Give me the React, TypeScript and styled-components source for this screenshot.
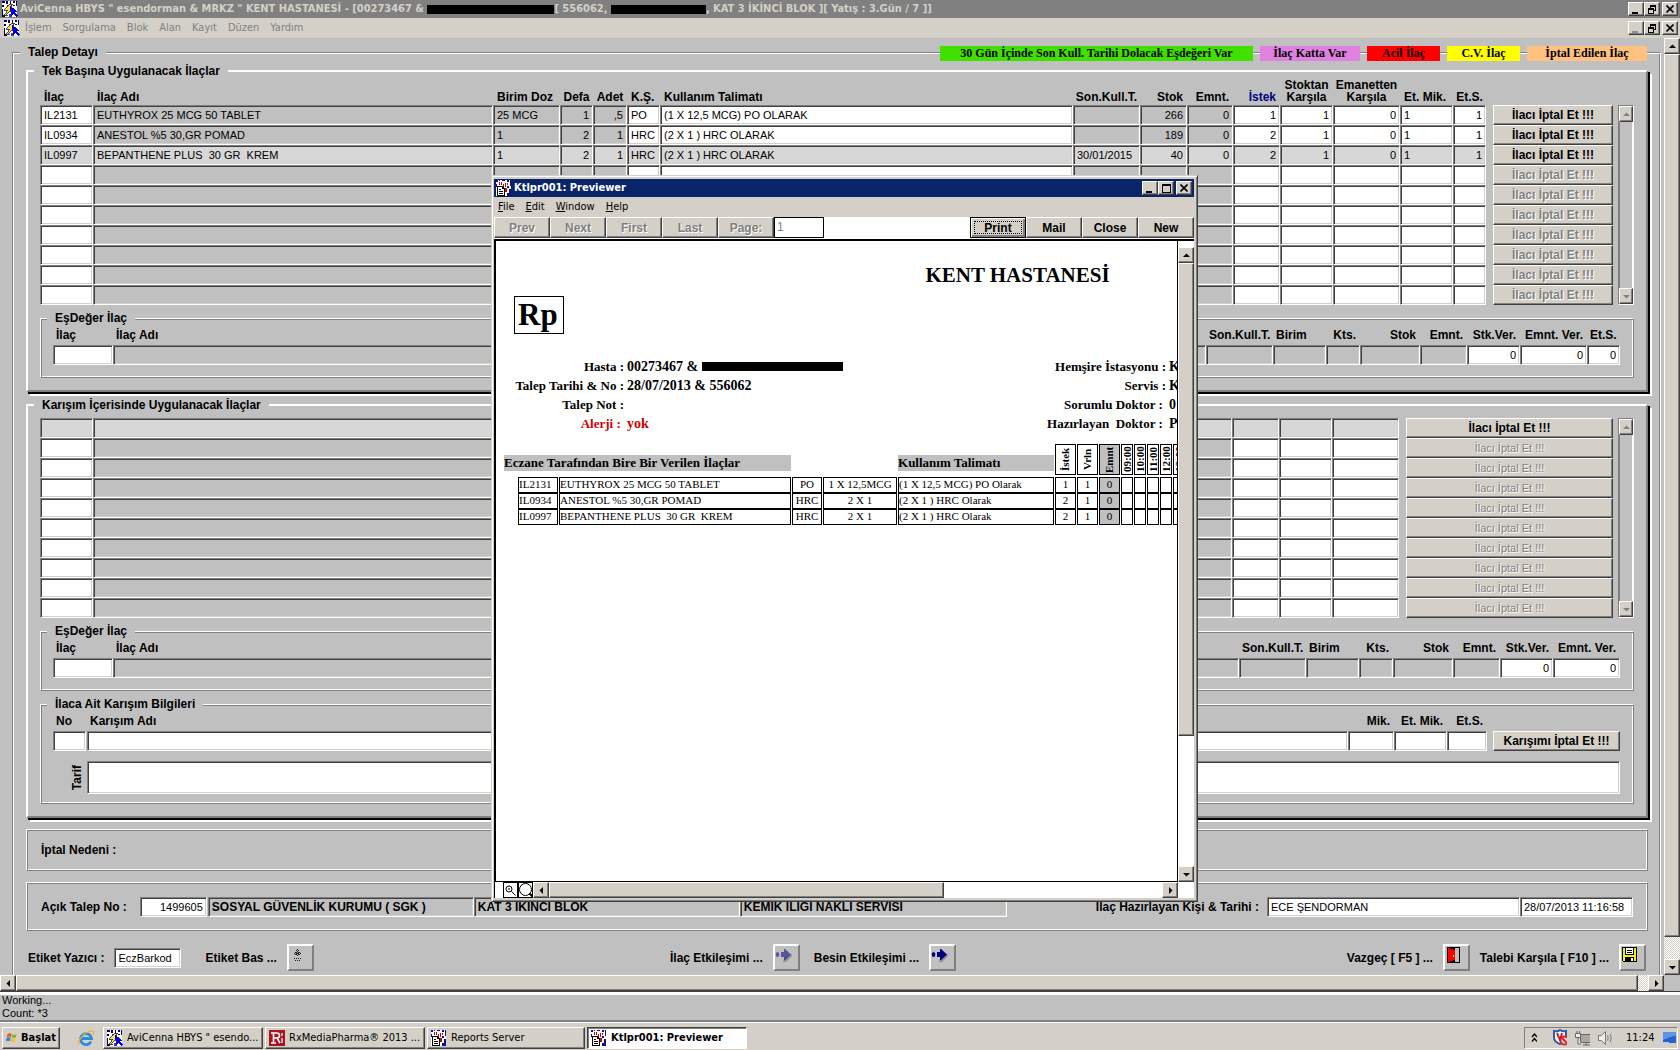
import React from "react";
import styled, { createGlobalStyle, css } from "styled-components";

const FACE = "#d4d0c8";
const FORM = "#c0c0c0";
const LIT = "#d7d7d7";
const NAVY = "#0a246a";

const UI_FONT = `"DejaVu Sans Condensed", "Noto Sans", sans-serif`;
const FORM_FONT = `"Liberation Sans", sans-serif`;
const PRINT_FONT = `"Liberation Serif", serif`;

const GlobalStyle = createGlobalStyle`
  *, *::before, *::after { box-sizing: border-box; }
  body { margin: 0; background: ${FACE}; }
  button, input, textarea { font: inherit; color: inherit; border-radius: 0; margin: 0; }
  button { cursor: default; }
`;

const raised = css`
  border: 1px solid;
  border-color: #fff #404040 #404040 #fff;
  box-shadow: inset -1px -1px 0 #808080;
  background: ${FACE};
`;

const sunken = css`
  border: 1px solid;
  border-color: #808080 #fff #fff #808080;
  box-shadow: inset 1px 1px 0 #404040, inset -1px -1px 0 ${FACE};
`;

const etched = css`
  border: 1px solid;
  border-color: #fff #808080 #808080 #fff;
  box-shadow: inset 1px 1px 0 #808080, inset -1px -1px 0 #fff;
`;

const Desktop = styled.div`
  position: relative;
  display: flex;
  flex-direction: column;
  height: 100vh;
  overflow: hidden;
  background: ${FORM};
  font-family: ${FORM_FONT};
  font-size: 12px;
  color: #000;
`;

/* ---------- window chrome ---------- */

const TitleBar = styled.header<{ $active?: boolean }>`
  display: flex;
  align-items: center;
  flex: none;
  height: 18px;
  padding: 0 2px;
  background: ${(p) => (p.$active ? NAVY : "#808080")};
  color: ${(p) => (p.$active ? "#fff" : FACE)};
  font: bold 11px/18px ${UI_FONT};
`;

const TitleText = styled.h1`
  display: flex;
  align-items: center;
  flex: 1;
  margin: 0 0 0 2px;
  font: inherit;
  white-space: pre;
`;

const Redacted = styled.span<{ $w: number }>`
  display: inline-block;
  width: ${(p) => p.$w}px;
  height: 9px;
  background: #000;
`;

const Caption = styled.div`
  display: flex;
`;

const CaptionButton = styled.button<{ $gap?: boolean }>`
  ${raised}
  display: flex;
  align-items: center;
  justify-content: center;
  width: 16px;
  height: 14px;
  padding: 0;
  margin-left: ${(p) => (p.$gap ? 2 : 0)}px;
`;

const MenuBar = styled.nav<{ $dim?: boolean }>`
  display: flex;
  align-items: center;
  flex: none;
  gap: 11px;
  height: 20px;
  padding: 0 2px 0 4px;
  background: ${FACE};
  color: ${(p) => (p.$dim ? "#808080" : "#000")};
  font: 11px/20px ${UI_FONT};
  > svg { margin-right: -6px; }
`;

const MenuItem = styled.button`
  padding: 0;
  border: 0;
  background: none;
`;

const Spacer = styled.div`
  flex: 1;
`;

/* ---------- scrollbars ---------- */

const Bar = styled.div<{ $v?: boolean; $plain?: boolean }>`
  display: flex;
  flex: ${(p) => (p.$v ? "none" : "1")};
  flex-direction: ${(p) => (p.$v ? "column" : "row")};
  ${(p) => (p.$v ? "width: 16px;" : "height: 16px;")}
  background: ${(p) =>
    p.$plain ? "#fff" : "repeating-conic-gradient(#fff 0 25%, #d4d0c8 0 50%) 0 0 / 2px 2px"};
`;

const ArrowButton = styled.button`
  ${raised}
  display: flex;
  align-items: center;
  justify-content: center;
  flex: none;
  width: 16px;
  height: 16px;
  padding: 0;
`;

const Thumb = styled.div`
  ${raised}
`;

const SideBar = styled.div`
  display: flex;
  flex-direction: column;
  justify-content: space-between;
  flex: none;
  width: 16px;
  border: 1px solid;
  border-color: #808080 #fff #fff #808080;
  box-shadow: inset 1px 0 0 #808080, inset -1px 0 0 #fff;
  button { width: 14px; }
`;

/* ---------- form ---------- */

const Viewport = styled.div`
  display: flex;
  flex: 1;
  min-height: 0;
`;

const Form = styled.main`
  flex: 1;
  min-width: 0;
  overflow: hidden;
  padding: 6px 3px 0 12px;
`;

const Legend = styled.legend`
  margin-left: -6px;
  padding: 0 8px;
  background: ${FORM};
  font-weight: bold;
  line-height: 16px;
`;

const Outer = styled.fieldset`
  position: relative;
  min-width: 0;
  min-height: 1000px;
  margin: 0;
  padding: 3px 12px 0 13px;
  border: 1px solid;
  border-color: #808080 #fff #fff #808080;
  box-shadow: inset 1px 1px 0 #fff, inset -1px 0 0 #808080;
`;

const Panel = styled.fieldset<{ $top?: number }>`
  min-width: 0;
  margin: 0 0 5px;
  padding: ${(p) => p.$top ?? 0}px 12px 12px;
  border: 2px solid;
  border-color: #fff #808080 #808080 #fff;
  box-shadow: 2px 2px 0 #000, 4px 4px 0 #fff;
`;

const Group = styled.fieldset<{ $bottom?: number }>`
  min-width: 0;
  margin: 5px 0 0;
  padding: 1px 13px ${(p) => p.$bottom ?? 12}px 12px;
  ${etched}
`;

const Plain = styled.section<{ $h: number }>`
  display: flex;
  align-items: center;
  height: ${(p) => p.$h}px;
  margin-top: 11px;
  padding: 0 14px;
  ${etched}
`;

const Badges = styled.div`
  position: absolute;
  top: -14px;
  right: 13px;
  display: flex;
  gap: 7px;
`;

const Badge = styled.span<{ $w: number; $bg: string }>`
  width: ${(p) => p.$w}px;
  background: ${(p) => p.$bg};
  font: bold 12px/15px ${PRINT_FONT};
  text-align: center;
  white-space: nowrap;
`;

const Split = styled.div`
  display: flex;
  gap: 5px;
`;

const GridTable = styled.table`
  flex: 1 1 auto;
  width: 100%;
  min-width: 0;
  table-layout: fixed;
  border-collapse: collapse;
  th {
    height: 26px;
    padding: 0 4px 2px;
    font-weight: bold;
    line-height: 12px;
    vertical-align: bottom;
    white-space: nowrap;
  }
  td { height: 20px; padding: 0; }
  td:last-child { padding-left: 7px; }
`;

const HeadText = styled.span<{ $align?: string; $blue?: boolean }>`
  display: flex;
  flex-direction: column;
  align-items: ${(p) => (p.$align === "right" ? "flex-end" : p.$align === "center" ? "center" : "flex-start")};
  text-align: ${(p) => p.$align ?? "left"};
  color: ${(p) => (p.$blue ? "#000080" : "#000")};
  white-space: pre;
`;

const Box = styled.input<{ $bg?: string; $align?: string; $bold?: boolean }>`
  ${sunken}
  display: block;
  width: 100%;
  height: 20px;
  padding: 0 3px;
  background: ${(p) => p.$bg ?? "#fff"};
  text-align: ${(p) => p.$align ?? "left"};
  font-weight: ${(p) => (p.$bold ? "bold" : "normal")};
  font-size: ${(p) => (p.$bold ? 12 : 11)}px;
  outline: 0;
`;

const PushButton = styled.button<{ $bold?: boolean }>`
  ${raised}
  display: block;
  width: 100%;
  height: 20px;
  padding: 0;
  font-weight: ${(p) => (p.$bold ? "bold" : "normal")};
  font-size: ${(p) => (p.$bold ? 12 : 11)}px;
  line-height: 16px;
  &:disabled { color: #808080; text-shadow: 1px 1px 0 #fff; }
`;

const FieldRow = styled.div`
  display: flex;
  align-items: flex-end;
`;

const FieldCell = styled.div<{ $w?: number; $gap?: number }>`
  flex: ${(p) => (p.$w ? `0 0 ${p.$w}px` : "1")};
  min-width: 0;
  margin-left: ${(p) => p.$gap ?? 0}px;
`;

const FieldLabel = styled.label<{ $right?: boolean }>`
  display: block;
  margin-bottom: 2px;
  padding: 0 4px 0 3px;
  font-weight: bold;
  line-height: 16px;
  text-align: ${(p) => (p.$right ? "right" : "left")};
  white-space: nowrap;
`;

const RecipeRow = styled.div`
  display: flex;
  align-items: center;
  margin-top: 10px;
`;

const VerticalLabel = styled.label`
  width: 20px;
  margin-left: 14px;
  font-weight: bold;
  line-height: 20px;
  text-align: center;
  writing-mode: vertical-rl;
  transform: rotate(180deg);
`;

const TextArea = styled.textarea`
  ${sunken}
  flex: 1;
  height: 33px;
  background: #fff;
  resize: none;
  outline: 0;
`;

const BoldLabel = styled.label<{ $auto?: boolean; $lead?: boolean }>`
  font-weight: bold;
  white-space: nowrap;
  margin-left: ${(p) => (p.$auto ? "auto" : p.$lead ? "4px" : "0")};
`;

const Actions = styled.div`
  display: flex;
  align-items: center;
  margin-top: 13px;
  padding: 0 2px;
`;

const ActionGroup = styled.div<{ $w?: number; $end?: boolean }>`
  display: flex;
  align-items: center;
  gap: 10px;
  flex: ${(p) => (p.$w ? `0 0 ${p.$w}px` : "none")};
  margin-left: ${(p) => (p.$end ? "auto" : "0")};
`;

const Gap = styled.span<{ $w: number }>`
  flex: none;
  width: ${(p) => p.$w}px;
`;

const IconButton = styled.button`
  width: 27px;
  height: 27px;
  padding: 0 6px 6px 0;
  border: 2px solid;
  border-color: #fff #808080 #808080 #fff;
  background: ${FORM};
  display: flex;
  align-items: center;
  justify-content: center;
`;

const HScrollRow = styled.div`
  display: flex;
  flex: none;
  height: 16px;
`;

const Status = styled.footer`
  flex: none;
  height: 31px;
  padding: 2px 2px 0;
  border-top: 1px solid #404040;
  border-bottom: 2px solid #808080;
  box-shadow: inset 0 3px 0 #fff;
  font-size: 11px;
  line-height: 13px;
`;

/* ---------- taskbar ---------- */

const Taskbar = styled.footer`
  display: flex;
  align-items: center;
  flex: none;
  height: 28px;
  padding: 2px 2px 0;
  background: ${FACE};
  border-top: 1px solid #fff;
  font: 11px/18px ${UI_FONT};
`;

const TaskButton = styled.button<{ $w: number; $active?: boolean }>`
  ${raised}
  display: flex;
  align-items: center;
  gap: 4px;
  width: ${(p) => p.$w}px;
  height: 22px;
  padding: 0 3px;
  margin-right: 2px;
  white-space: nowrap;
  ${(p) =>
    p.$active &&
    css`
      background: #fff;
      border-color: #404040 #fff #fff #404040;
      box-shadow: inset 1px 1px 0 #808080;
      font-weight: bold;
    `}
`;

const Tray = styled.div`
  display: flex;
  align-items: center;
  gap: 8px;
  width: 154px;
  height: 22px;
  margin-left: auto;
  padding: 0 1px 0 6px;
  border: 1px solid;
  border-color: #808080 #fff #fff #808080;
`;

const Clock = styled.time`
  margin-left: 6px;
`;

/* ---------- previewer window ---------- */

const Previewer = styled.section`
  position: absolute;
  left: 491px;
  top: 175px;
  width: 707px;
  height: 727px;
  display: flex;
  flex-direction: column;
  padding: 3px 3px 3px 2px;
  background: ${FACE};
  border: 1px solid;
  border-color: ${FACE} #404040 #404040 ${FACE};
  box-shadow: inset 1px 1px 0 #fff, inset -1px -1px 0 #808080;
`;

const Tools = styled.div`
  display: flex;
  flex: none;
  height: 22px;
  background: #fff;
`;

const ToolButton = styled.button<{ $focus?: boolean }>`
  ${raised}
  width: 56px;
  height: 21px;
  padding: 0;
  font: bold 12px/16px ${FORM_FONT};
  &:disabled { color: #808080; text-shadow: 1px 1px 0 #fff; }
  ${(p) =>
    p.$focus &&
    css`
      border-color: #000;
      outline: 1px dotted #000;
      outline-offset: -5px;
      box-shadow: inset 1px 1px 0 #fff, inset -2px -2px 0 #808080;
    `}
`;

const PageBox = styled.input`
  width: 50px;
  height: 21px;
  padding: 0 2px 2px;
  border: 1px solid #000;
  background: #fff;
  color: #808080;
  outline: 0;
`;

const Stage = styled.div`
  display: flex;
  flex: 1;
  min-height: 0;
  background: #fff;
  border-top: 2px solid #000;
`;

const Sheet = styled.div`
  flex: 1;
  min-width: 0;
  overflow: hidden;
  border: solid #000;
  border-width: 0 1px 1px 2px;
  background: #fff;
  font-family: ${PRINT_FONT};
`;

const StageSide = styled.div`
  display: flex;
  padding-top: 6px;
`;

const Foot = styled.div`
  display: flex;
  flex: none;
  height: 16px;
  padding-left: 8px;
  background: #fff;
  border-left: 1px solid #000;
`;

const ZoomButton = styled.button`
  width: 15px;
  height: 16px;
  padding: 0;
  border: 1px solid #000;
  background: #fff;
  display: flex;
  align-items: center;
  justify-content: center;
`;

const Report = styled.article`
  width: 1043px;
  padding-top: 22px;
`;

const Hospital = styled.h2`
  margin: 0;
  font: bold 21px/24px ${PRINT_FONT};
  text-align: center;
`;

const Rp = styled.div`
  width: 50px;
  height: 38px;
  margin: 9px 0 23px 18px;
  padding-left: 3px;
  border: 1px solid #000;
  font-weight: bold;
  font-size: 31px;
  line-height: 36px;
`;

const Details = styled.dl`
  display: grid;
  grid-template-columns: 128px 340px 196px 200px;
  column-gap: 3px;
  margin: 0 0 11px;
  font-weight: bold;
  font-size: 13px;
  line-height: 19px;
  white-space: pre;
  dt { text-align: right; }
  dd { margin: 0; display: flex; align-items: center; font-size: 14px; }
`;

const Red = styled.span`
  color: #d40000;
`;

const ReportTable = styled.table`
  table-layout: fixed;
  width: 683px;
  margin-left: 7px;
  border-collapse: separate;
  border-spacing: 1px 0;
  font-size: 11px;
  white-space: pre;
  td {
    height: 16px;
    padding: 0;
    border: 1px solid #000;
    line-height: 13px;
    vertical-align: top;
    overflow: hidden;
  }
  td:first-child { border: 0; }
  th { height: 33px; padding: 0; vertical-align: top; }
`;

const Cell = styled.td<{ $center?: boolean; $gray?: boolean }>`
  text-align: ${(p) => (p.$center ? "center" : "left")};
  background: ${(p) => (p.$gray ? FORM : "#fff")};
`;

const SectionName = styled.span`
  display: block;
  margin-top: 11px;
  background: ${FORM};
  font-size: 13px;
  line-height: 16px;
  text-align: left;
`;

const Upright = styled.span<{ $gray?: boolean; $w: number }>`
  display: block;
  width: ${(p) => p.$w}px;
  height: 31px;
  border: 1px solid #000;
  background: ${(p) => (p.$gray ? FORM : "#fff")};
  font-size: 11px;
  line-height: ${(p) => p.$w - 2}px;
  text-align: center;
  writing-mode: vertical-rl;
  transform: rotate(180deg);
`;

/* ---------- drawings ---------- */

const AppIcon = () => (
  <svg width="16" height="16" viewBox="0 0 16 16" shapeRendering="crispEdges" aria-hidden="true">
    <path d="M0 0h15v16H0z" fill="#fff" />
    <path d="M0 0h3v2H0zM4 0h2v3H4zM8 0h1v3H8zM11 0h2v2h-2zM14 0h1v5h-1zM0 4h2v2H0zM0 8h1v8H0zM1 14h2v2H1zM11 4h2v1h-2z" fill="#000060" />
    <path d="M5 4h2v2H5zM7 13h3v3H7zM4 14h2v1H4z" fill="#3c3ca0" />
    <path d="M2 14l4-5H2l6-6h3L8 7h4l-8 7z" fill="#ffe24a" stroke="#222" strokeWidth=".8" />
    <path d="M8 5l8 6h-3l3 4-2 1-3-3-2 2z" fill="#0000e0" />
  </svg>
);

const ReportIcon = () => (
  <svg width="16" height="16" viewBox="0 0 16 16" shapeRendering="crispEdges" aria-hidden="true">
    <path d="M0 0h15v16H0z" fill="#fff" />
    <path d="M0 0h2v2H0zM3 0h1v1H3zM6 0h3v1H6zM11 0h2v2h-2zM14 0h1v6h-1zM0 4h1v3H0zM11 6h2v2h-2zM13 9h2v7h-2zM11 13h2v3h-2z" fill="#10108a" />
    <path d="M3 2h1v3H3zM5 2h1v3H5zM9 3h1v4H9zM7 4h1v3H7zM11 3h1v2h-1zM9 8h2v4H9z" fill="#d00000" />
    <path d="M1 6h5l3 3v7H1z" fill="#000" />
    <path d="M2 7h4v2h2v6H2z" fill="#fff" />
    <path d="M3 9h2v1H3zM3 11h4v1H3zM3 13h4v1H3z" fill="#000" />
  </svg>
);

type Dir = "up" | "down" | "left" | "right";
const arrows: Record<Dir, string> = {
  up: "M0 5h7L3.5 1.500z",
  down: "M0 2h7L3.500 5.500z",
  left: "M5 0v7L1.500 3.500z",
  right: "M2 0v7l3.500-3.500z",
};

const Arrow = ({ dir, dim }: { dir: Dir; dim?: boolean }) => (
  <ArrowButton aria-label={dir} disabled={dim}>
    <svg width="7" height="7" viewBox="0 0 7 7" aria-hidden="true">
      <path d={arrows[dir]} fill={dim ? "#808080" : "#000"} />
    </svg>
  </ArrowButton>
);

const CaptionSet = ({ max, dimMin }: { max?: boolean; dimMin?: boolean }) => (
  <Caption>
    <CaptionButton aria-label="Minimize">
      <svg width="10" height="9" shapeRendering="crispEdges" aria-hidden="true">
        <path d="M1 7h6v2H1z" fill={dimMin ? "#909090" : "#000"} />
      </svg>
    </CaptionButton>
    <CaptionButton aria-label={max ? "Maximize" : "Restore"}>
      <svg width="9" height="9" shapeRendering="crispEdges" aria-hidden="true">
        {max ? (
          <path d="M0 0h9v9H0zM1 2v6h7V2z" fillRule="evenodd" />
        ) : (
          <path d="M2 0h6v6H6v3H0V3h2zM3 2v1h3v2h1V2zM1 5v3h4V5z" fillRule="evenodd" />
        )}
      </svg>
    </CaptionButton>
    <CaptionButton aria-label="Close" $gap>
      <svg width="8" height="8" aria-hidden="true">
        <path d="M.5.5l7 7M7.500.5l-7 7" stroke="#000" strokeWidth="1.600" />
      </svg>
    </CaptionButton>
  </Caption>
);

const ArrowGlyph = ({ dim }: { dim?: boolean }) => (
  <svg width="17" height="14" viewBox="0 0 17 14" aria-hidden="true">
    <path d="M8 14l1-4h1l7-4v2l-6 6z" fill="#909090" />
    <g fill="#000080" opacity={dim ? 0.55 : 1}>
      <ellipse cx="2.500" cy="6.500" rx="1.800" ry="2.500" />
      <path d="M6 4h3V1h1l6 5.500-6 5.500H9V9H6z" />
    </g>
  </svg>
);

/* ---------- data ---------- */

type Col = { head: string; w?: number; right?: boolean; align?: string; gray?: boolean; blue?: boolean };

const cols: Col[] = [
  { head: "İlaç", w: 53 },
  { head: "İlaç Adı", gray: true },
  { head: "Birim Doz", w: 67, gray: true },
  { head: "Defa", w: 33, right: true, gray: true, align: "center" },
  { head: "Adet", w: 34, right: true, gray: true, align: "center" },
  { head: "K.Ş.", w: 33 },
  { head: "Kullanım Talimatı", w: 413 },
  { head: "Son.Kull.T.", w: 67, gray: true, align: "center" },
  { head: "Stok", w: 47, right: true, gray: true, align: "right" },
  { head: "Emnt.", w: 46, right: true, gray: true, align: "right" },
  { head: "İstek", w: 47, right: true, align: "right", blue: true },
  { head: "Stoktan\nKarşıla", w: 53, right: true, align: "center" },
  { head: "Emanetten\nKarşıla", w: 67, right: true, align: "center" },
  { head: "Et. Mik.", w: 53 },
  { head: "Et.S.", w: 33, right: true, align: "center" },
];

const drugs = [
  ["IL2131", "EUTHYROX 25 MCG 50 TABLET", "25 MCG", "1", ",5", "PO", "(1 X 12,5 MCG) PO OLARAK", "", "266", "0", "1", "1", "0", "1", "1"],
  ["IL0934", "ANESTOL %5 30,GR POMAD", "1", "2", "1", "HRC", "(2 X 1 ) HRC OLARAK", "", "189", "0", "2", "1", "0", "1", "1"],
  ["IL0997", "BEPANTHENE PLUS  30 GR  KREM", "1", "2", "1", "HRC", "(2 X 1 ) HRC OLARAK", "30/01/2015", "40", "0", "2", "1", "0", "1", "1"],
];

const ten = Array.from({ length: 10 }, (_, i) => i);

const mixCols: Col[] = [
  { head: "İlaç", w: 53 },
  { head: "İlaç Adı", gray: true },
  { head: "Emnt.", w: 46, gray: true },
  { head: "İstek", w: 47 },
  { head: "Stoktan Karşıla", w: 53 },
  { head: "Emanetten Karşıla", w: 67 },
];

const printed = [
  ["IL2131", "EUTHYROX 25 MCG 50 TABLET", "PO", "1 X 12,5MCG", "(1 X 12,5 MCG) PO Olarak", "1", "1", "0"],
  ["IL0934", "ANESTOL %5 30,GR POMAD", "HRC", "2 X 1", "(2 X 1 ) HRC Olarak", "2", "1", "0"],
  ["IL0997", "BEPANTHENE PLUS  30 GR  KREM", "HRC", "2 X 1", "(2 X 1 ) HRC Olarak", "2", "1", "0"],
];
const hours = ["09:00", "10:00", "11:00", "12:00", "13:00"];
const printWidths = [13, 40, 232, 30, 74, 156, 21, 21, 21, 12, 12, 12, 12, 12];

/* ---------- parts ---------- */

const ScrollHolder = styled.div<{ $offset?: boolean }>`
  display: flex;
  flex: none;
  padding-top: ${(p) => (p.$offset ? 26 : 0)}px;
`;

const TableScroll = ({ offset }: { offset?: boolean }) => (
  <ScrollHolder $offset={offset}>
    <SideBar>
      <Arrow dir="up" dim />
      <Arrow dir="down" dim />
    </SideBar>
  </ScrollHolder>
);

const DrugTable = () => (
  <Split>
    <GridTable>
      <colgroup>
        {cols.map((c) => <col key={c.head} style={c.w ? { width: c.w } : undefined} />)}
        <col style={{ width: 127 }} />
      </colgroup>
      <thead>
        <tr>
          {cols.map((c) => (
            <th key={c.head} scope="col">
              <HeadText $align={c.align} $blue={c.blue}>{c.head}</HeadText>
            </th>
          ))}
          <th aria-label="İptal" />
        </tr>
      </thead>
      <tbody>
        {ten.map((r) => (
          <tr key={r}>
            {cols.map((c, i) => (
              <td key={c.head}>
                <Box
                  aria-label={`${c.head} ${r + 1}`}
                  defaultValue={drugs[r]?.[i] ?? ""}
                  $align={c.right ? "right" : "left"}
                  $bg={r === 2 ? LIT : c.gray ? FORM : "#fff"}
                />
              </td>
            ))}
            <td>
              <PushButton $bold disabled={r > 2}>İlacı İptal Et !!!</PushButton>
            </td>
          </tr>
        ))}
      </tbody>
    </GridTable>
    <TableScroll offset />
  </Split>
);

const MixTable = () => (
  <Split>
    <GridTable aria-label="Karışım ilaçları">
      <colgroup>
        {mixCols.map((c) => <col key={c.head} style={c.w ? { width: c.w } : undefined} />)}
        <col style={{ width: 214 }} />
      </colgroup>
      <tbody>
        {ten.map((r) => (
          <tr key={r}>
            {mixCols.map((c) => (
              <td key={c.head}>
                <Box aria-label={`${c.head} ${r + 1}`} $bg={r === 0 ? LIT : c.gray ? FORM : "#fff"} />
              </td>
            ))}
            <td>
              <PushButton $bold={r === 0} disabled={r > 0}>İlacı İptal Et !!!</PushButton>
            </td>
          </tr>
        ))}
      </tbody>
    </GridTable>
    <TableScroll />
  </Split>
);

type FieldProps = { id: string; label: string; w?: number; gap?: number; right?: boolean; gray?: boolean; value?: string };

const Field = ({ id, label, w, gap, right, gray, value }: FieldProps) => (
  <FieldCell $w={w} $gap={gap}>
    <FieldLabel htmlFor={id} $right={right}>{label}</FieldLabel>
    <Box id={id} defaultValue={value} $align={right ? "right" : "left"} $bg={gray ? FORM : "#fff"} />
  </FieldCell>
);

const Equivalent = ({ id, packs }: { id: string; packs?: boolean }) => (
  <Group>
    <Legend>EşDeğer İlaç</Legend>
    <FieldRow>
      <Field id={id + "kod"} label="İlaç" w={60} />
      <Field id={id + "ad"} label="İlaç Adı" gray />
      <Field id={id + "son"} label="Son.Kull.T." w={67} gray />
      <Field id={id + "birim"} label="Birim" w={53} gray />
      <Field id={id + "kts"} label="Kts." w={34} right gray />
      <Field id={id + "stok"} label="Stok" w={60} right gray />
      <Field id={id + "emnt"} label="Emnt." w={47} right gray />
      <Field id={id + "stk"} label="Stk.Ver." w={53} right value="0" />
      <Field id={id + "ever"} label="Emnt. Ver." w={67} right value="0" />
      {packs && <Field id={id + "ets"} label="Et.S." w={33} right value="0" />}
    </FieldRow>
  </Group>
);

const ReportView = () => (
  <Report>
    <Hospital>KENT HASTANESİ</Hospital>
    <Rp>Rp</Rp>
    <Details>
      <dt>Hasta :</dt>
      <dd>{"00273467 & "}<Redacted $w={141} /></dd>
      <dt>Hemşire İstasyonu :</dt>
      <dd>K</dd>
      <dt>{"Talep Tarihi & No :"}</dt>
      <dd>{"28/07/2013 & 556062"}</dd>
      <dt>Servis :</dt>
      <dd>K</dd>
      <dt>Talep Not :</dt>
      <dd />
      <dt>{"Sorumlu Doktor : "}</dt>
      <dd>0</dd>
      <dt><Red>{"Alerji : "}</Red></dt>
      <dd><Red>yok</Red></dd>
      <dt>{"Hazırlayan  Doktor : "}</dt>
      <dd>P</dd>
    </Details>
    <ReportTable>
      <colgroup>
        {printWidths.map((w, i) => <col key={i} style={{ width: w }} />)}
      </colgroup>
      <thead>
        <tr>
          <th colSpan={3}><SectionName>Eczane Tarafından Bire Bir Verilen İlaçlar</SectionName></th>
          <th colSpan={2} />
          <th><SectionName>Kullanım Talimatı</SectionName></th>
          <th><Upright $w={21}>İstek</Upright></th>
          <th><Upright $w={21}>Vrln</Upright></th>
          <th><Upright $w={21} $gray>Emnt</Upright></th>
          {hours.map((h) => <th key={h}><Upright $w={12}>{h}</Upright></th>)}
        </tr>
      </thead>
      <tbody>
        {printed.map((row) => (
          <tr key={row[0]}>
            <td />
            {row.map((v, i) => (
              <Cell key={i} $center={i === 2 || i === 3 || i > 4} $gray={i === 7}>{v}</Cell>
            ))}
            {hours.map((h) => <Cell key={h} />)}
          </tr>
        ))}
      </tbody>
    </ReportTable>
  </Report>
);

const PreviewWindow = () => (
  <Previewer aria-label="Previewer">
    <TitleBar $active>
      <ReportIcon />
      <TitleText as="h2">Ktlpr001: Previewer</TitleText>
      <CaptionSet max />
    </TitleBar>
    <MenuBar>
      <MenuItem><u>F</u>ile</MenuItem>
      <MenuItem><u>E</u>dit</MenuItem>
      <MenuItem><u>W</u>indow</MenuItem>
      <MenuItem><u>H</u>elp</MenuItem>
    </MenuBar>
    <Tools>
      {["Prev", "Next", "First", "Last", "Page:"].map((t) => <ToolButton key={t} disabled>{t}</ToolButton>)}
      <PageBox aria-label="Page" defaultValue="1" />
      <Spacer />
      <ToolButton $focus>Print</ToolButton>
      <ToolButton>Mail</ToolButton>
      <ToolButton>Close</ToolButton>
      <ToolButton>New</ToolButton>
    </Tools>
    <Stage>
      <Sheet><ReportView /></Sheet>
      <StageSide>
        <Bar $v $plain>
          <Arrow dir="up" />
          <Thumb style={{ flex: 472 }} />
          <Spacer style={{ flex: 130 }} />
          <Arrow dir="down" />
        </Bar>
      </StageSide>
    </Stage>
    <Foot>
      <ZoomButton aria-label="Zoom out">
        <svg width="11" height="11" fill="none" stroke="#000" aria-hidden="true">
          <circle cx="4" cy="4" r="3" />
          <path d="M3 4h2M6.500 6.500l4 4" />
        </svg>
      </ZoomButton>
      <ZoomButton aria-label="Zoom in">
        <svg width="14" height="14" fill="none" stroke="#000" aria-hidden="true">
          <circle cx="6.500" cy="6.500" r="6" />
          <path d="M10.500 10.500l3 3" strokeWidth="2" />
        </svg>
      </ZoomButton>
      <Bar $plain>
        <Arrow dir="left" />
        <Thumb style={{ flex: 394 }} />
        <Spacer style={{ flex: 218 }} />
        <Arrow dir="right" />
      </Bar>
      <Gap $w={16} />
    </Foot>
  </Previewer>
);

export default function App() {
  return (
    <Desktop>
      <GlobalStyle />
      <TitleBar>
        <AppIcon />
        <TitleText>
          {'AviCenna HBYS " esendorman & MRKZ " KENT HASTANESİ - [00273467 & '}
          <Redacted $w={127} />
          {"[ 556062, "}
          <Redacted $w={95} />
          {", KAT 3 İKİNCİ BLOK ][ Yatış : 3.Gün / 7 ]]"}
        </TitleText>
        <CaptionSet />
      </TitleBar>
      <MenuBar $dim>
        <AppIcon />
        {["İşlem", "Sorgulama", "Blok", "Alan", "Kayıt", "Düzen", "Yardım"].map((m) => (
          <MenuItem key={m}>{m}</MenuItem>
        ))}
        <Spacer />
        <CaptionSet dimMin />
      </MenuBar>

      <Viewport>
        <Form>
          <Outer>
            <Legend>Talep Detayı</Legend>
            <Badges>
              <Badge $w={313} $bg="#40e000">30 Gün İçinde Son Kull. Tarihi Dolacak Eşdeğeri Var</Badge>
              <Badge $w={100} $bg="#e080e0">İlaç Katta Var</Badge>
              <Badge $w={73} $bg="#ff0000">Acil İlaç</Badge>
              <Badge $w={73} $bg="#ffff00">C.V. İlaç</Badge>
              <Badge $w={120} $bg="#ffc080">İptal Edilen İlaç</Badge>
            </Badges>

            <Panel>
              <Legend>Tek Başına Uygulanacak İlaçlar</Legend>
              <DrugTable />
              <Equivalent id="a" packs />
            </Panel>

            <Panel $top={5}>
              <Legend>Karışım İçerisinde Uygulanacak İlaçlar</Legend>
              <MixTable />
              <Equivalent id="b" />
              <Group $bottom={9}>
                <Legend>İlaca Ait Karışım Bilgileri</Legend>
                <FieldRow>
                  <Field id="no" label="No" w={33} />
                  <Field id="mix" label="Karışım Adı" gap={1} />
                  <Field id="mik" label="Mik." w={46} right />
                  <Field id="etmik" label="Et. Mik." w={53} right />
                  <Field id="mixets" label="Et.S." w={40} right />
                  <FieldCell $w={127} $gap={6}>
                    <PushButton $bold>Karışımı İptal Et !!!</PushButton>
                  </FieldCell>
                </FieldRow>
                <RecipeRow>
                  <VerticalLabel htmlFor="tarif">Tarif</VerticalLabel>
                  <TextArea id="tarif" />
                </RecipeRow>
              </Group>
            </Panel>

            <Plain $h={42}>
              <BoldLabel as="span">İptal Nedeni :</BoldLabel>
            </Plain>

            <Plain $h={49}>
              <BoldLabel htmlFor="talep">Açık Talep No :</BoldLabel>
              <FieldCell $w={67} $gap={13}><Box id="talep" defaultValue="1499605" $align="right" /></FieldCell>
              <FieldCell $w={266} $gap={1}><Box aria-label="Kurum" defaultValue="SOSYAL GÜVENLİK KURUMU ( SGK )" $bg={FORM} $bold /></FieldCell>
              <FieldCell $w={266}><Box aria-label="Kat" defaultValue="KAT 3 IKINCI BLOK" $bg={FORM} $bold /></FieldCell>
              <FieldCell $w={267}><Box aria-label="Servis" defaultValue="KEMIK ILIĞI NAKLI SERVISI" $bg={FORM} $bold /></FieldCell>
              <BoldLabel htmlFor="kisi" $auto>{"İlaç Hazırlayan Kişi & Tarihi :"}</BoldLabel>
              <FieldCell $w={253} $gap={8}><Box id="kisi" defaultValue="ECE ŞENDORMAN" /></FieldCell>
              <FieldCell $w={113}><Box aria-label="Tarih" defaultValue="28/07/2013 11:16:58" /></FieldCell>
            </Plain>

            <Actions>
              <ActionGroup $w={642}>
                <BoldLabel htmlFor="yazici">Etiket Yazıcı :</BoldLabel>
                <FieldCell $w={67}><Box id="yazici" defaultValue="EczBarkod" /></FieldCell>
                <Gap $w={4} />
                <BoldLabel as="span">Etiket Bas ...</BoldLabel>
                <IconButton aria-label="Etiket Bas">
                  <svg width="11" height="12" fill="none" stroke="#202020" strokeDasharray="1 1" aria-hidden="true">
                    <path d="M5.500 0v8M4.500 1v6M6.500 1v6M3.500 3v3M7.500 3v3M2 4.500h7M2 9.500h7M3 11.500h5" />
                  </svg>
                </IconButton>
              </ActionGroup>
              <ActionGroup>
                <BoldLabel as="span">İlaç Etkileşimi ...</BoldLabel>
                <IconButton aria-label="İlaç Etkileşimi"><ArrowGlyph dim /></IconButton>
                <BoldLabel as="span" $lead>Besin Etkileşimi ...</BoldLabel>
                <IconButton aria-label="Besin Etkileşimi"><ArrowGlyph /></IconButton>
              </ActionGroup>
              <ActionGroup $end>
                <BoldLabel as="span">Vazgeç [ F5 ] ...</BoldLabel>
                <IconButton aria-label="Vazgeç">
                  <svg width="13" height="16" shapeRendering="crispEdges" aria-hidden="true">
                    <path d="M0 0h13v16H0z" fill="#000" />
                    <path d="M8 1h4v14H8z" fill={FORM} />
                    <path d="M1 1l7 2v10l-7 2z" fill="#f00" />
                    <path d="M6 8h1v2H6z" fill="#ff0" />
                  </svg>
                </IconButton>
                <BoldLabel as="span">Talebi Karşıla [ F10 ] ...</BoldLabel>
                <IconButton aria-label="Talebi Karşıla">
                  <svg width="15" height="15" shapeRendering="crispEdges" aria-hidden="true">
                    <path d="M0 0h15v15H1L0 14z" fill="#000" />
                    <path d="M1 1h13v13H1z" fill="#f4f000" />
                    <path d="M3 0h9v8H3z" fill="#000" />
                    <path d="M4 1h7v6H4z" fill="#fff" />
                    <path d="M5 3h5M5 5h5" stroke="#000" />
                    <path d="M3 10h9v5H3z" fill="#000" />
                    <path d="M9 11h2v3H9z" fill="#fff" />
                  </svg>
                </IconButton>
              </ActionGroup>
            </Actions>
          </Outer>
        </Form>
        <Bar $v>
          <Arrow dir="up" />
          <Thumb style={{ flex: 884 }} />
          <Spacer style={{ flex: 22 }} />
          <Arrow dir="down" />
        </Bar>
      </Viewport>
      <HScrollRow>
        <Bar>
          <Arrow dir="left" />
          <Thumb style={{ flex: 1622 }} />
          <Spacer style={{ flex: 10 }} />
          <Arrow dir="right" />
        </Bar>
        <Gap $w={16} />
      </HScrollRow>
      <Status>
        <div>Working...</div>
        <div>Count: *3</div>
      </Status>

      <Taskbar>
        <TaskButton $w={58}>
          <svg width="15" height="15" viewBox="0 0 15 15" aria-hidden="true">
            <path d="M2 3q3-2 5.500-.5L6.500 7Q4 5.500 1 7z" fill="#e8501e" />
            <path d="M8.500 3q3 1.500 6 .2L13 8q-3 1-5.500-.5z" fill="#7cb82f" />
            <path d="M.8 8q3-1.500 5.500 0L5 12.500Q3 11 0 12.500z" fill="#3a7be0" />
            <path d="M7 8.500q3 1.500 6 .3l-1.300 4.700q-3 1-5.700-.5z" fill="#f6c12a" />
          </svg>
          <b>Başlat</b>
        </TaskButton>
        <Gap $w={15} />
        <svg width="18" height="18" viewBox="0 0 18 18" fill="none" aria-label="Internet Explorer">
          <path d="M14 12.500A5.500 5.500 0 1 1 14.500 9.500H4.500" stroke="#2a8ae0" strokeWidth="2.800" />
          <path d="M2 15.500C-1 13 8 2 15 2.200c3 .5 1 4 1 4" stroke="#f0b428" strokeWidth="1.300" />
        </svg>
        <Gap $w={8} />
        <TaskButton $w={160}><AppIcon />{'AviCenna HBYS " esendo...'}</TaskButton>
        <TaskButton $w={160}>
          <svg width="16" height="16" aria-hidden="true">
            <rect width="16" height="16" fill="#a81420" />
            <path d="M2 3h5.500q3 0 3 2.500T8 8l3 5M4.500 3v10M4.500 8H8M2 13h5" fill="none" stroke="#fff" strokeWidth="1.600" />
            <path d="M13 3v3M13 8v5" stroke="#fff" strokeWidth="1.200" />
          </svg>
          {"RxMediaPharma® 2013 ..."}
        </TaskButton>
        <TaskButton $w={158}><ReportIcon />Reports Server</TaskButton>
        <TaskButton $w={160} $active><ReportIcon />Ktlpr001: Previewer</TaskButton>
        <Tray>
          <svg width="7" height="10" fill="none" stroke="#000" strokeWidth="1.300" aria-hidden="true">
            <path d="M1 4l2.500-3L6 4M1 8.500l2.500-3 2.500 3" />
          </svg>
          <Gap $w={0} />
          <svg width="17" height="17" aria-hidden="true">
            <path d="M1 2q4 1 6-1 3 2 6 1v6q0 5-6 7-6-2-6-7z" fill="#fff" stroke="#2e5fa8" strokeWidth="2" />
            <path d="M4 4l3 7 2-7" fill="none" stroke="#c8202c" strokeWidth="2" />
            <circle cx="11.500" cy="11.500" r="4" fill="#f7caca" stroke="#d8202c" strokeWidth="1.800" />
            <path d="M9 9l5 5" stroke="#d8202c" strokeWidth="1.800" />
          </svg>
          <svg width="17" height="16" fill="none" stroke="#666" aria-hidden="true">
            <path d="M5.500 4.500h10v8h-10z" fill="#a8a8a8" />
            <path d="M8 15h7M11 12.500V15" />
            <path d="M.5 3.500h5v4h-5zM2 1v2.500M4.500 1v2.500M3 7.500V14h3" fill="#eee" />
          </svg>
          <svg width="17" height="16" fill="none" stroke="#777" aria-hidden="true">
            <path d="M.5 5.500h3l4-4v13l-4-4h-3z" fill="#eee" />
            <path d="M9.500 5.500q1.500 2.500 0 5M12 4q2.500 4 0 8M14 2.500q3.500 5.500 0 11" />
          </svg>
          <Clock>11:24</Clock>
          <svg width="16" height="14" aria-hidden="true">
            <rect y="1" width="16" height="11" fill="#2a62c8" />
            <path d="M0 1h16v3Q8 5 0 9z" fill="#5c96ea" />
            <path d="M0 11h6v2H0z" fill="#b8d4f4" />
          </svg>
        </Tray>
      </Taskbar>

      <PreviewWindow />
    </Desktop>
  );
}
